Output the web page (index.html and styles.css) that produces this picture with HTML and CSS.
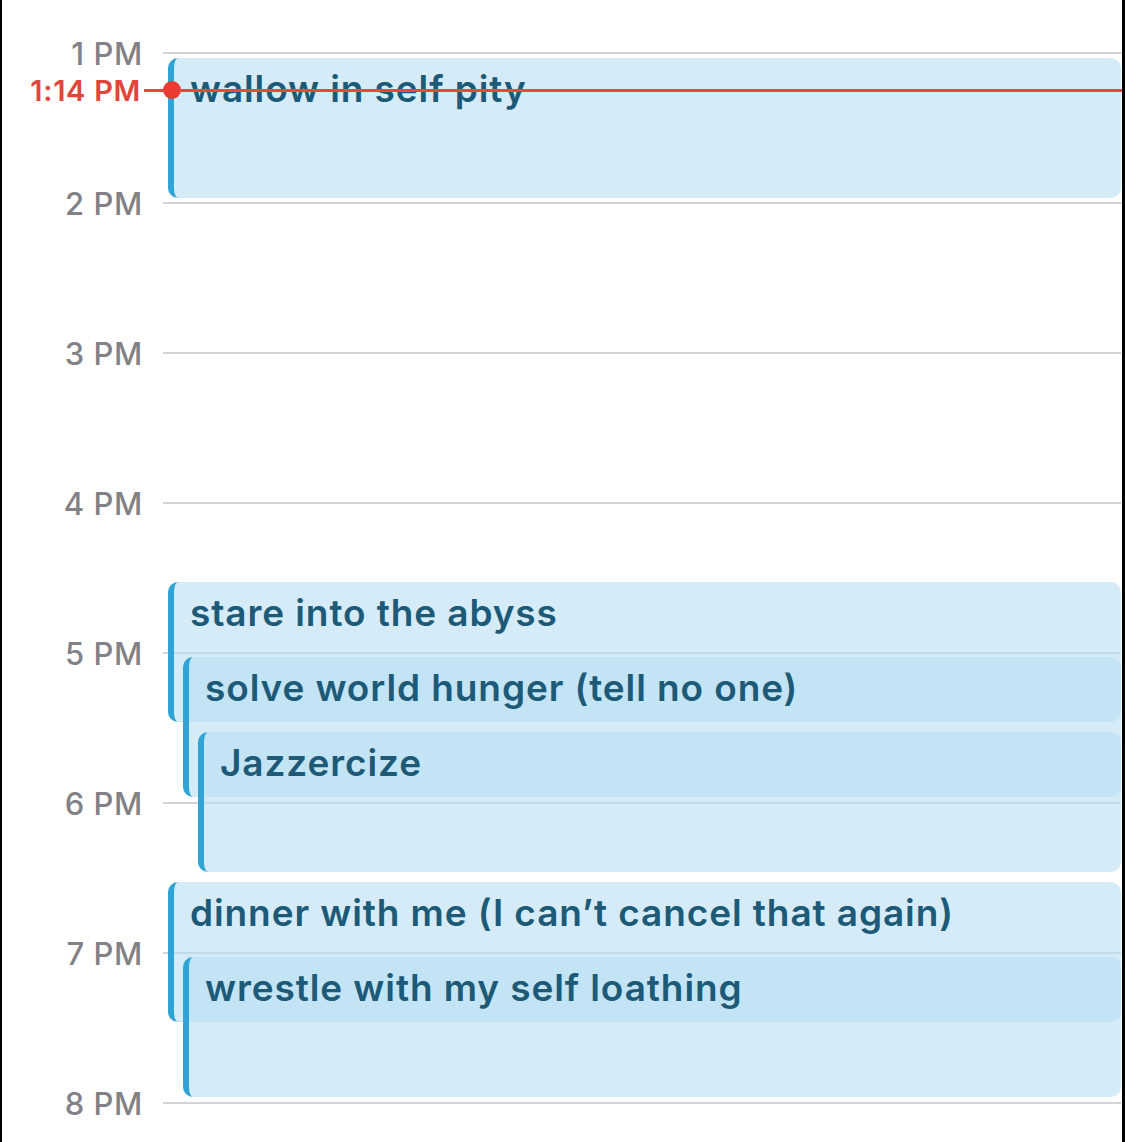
FILE: index.html
```html
<!DOCTYPE html>
<html>
<head>
  <title>Day</title>
  <link rel="stylesheet" href="styles.css">
</head>
<body>
  <div class="day">
    <div class="hour"><span class="label">1 PM</span><span class="rule"></span></div>
    <div class="hour"><span class="label">2 PM</span><span class="rule"></span></div>
    <div class="hour"><span class="label">3 PM</span><span class="rule"></span></div>
    <div class="hour"><span class="label">4 PM</span><span class="rule"></span></div>
    <div class="hour"><span class="label">5 PM</span><span class="rule"></span></div>
    <div class="hour"><span class="label">6 PM</span><span class="rule"></span></div>
    <div class="hour"><span class="label">7 PM</span><span class="rule"></span></div>
    <div class="hour hour-last"><span class="label">8 PM</span><span class="rule"></span></div>

    <!-- events sit on the time canvas -->
    <div class="event ev-wallow">wallow in self pity</div>
    <div class="event ev-stare">stare into the abyss</div>
    <div class="event ev-solve">solve world hunger (tell no one)</div>
    <div class="event ev-jazz">Jazzercize</div>
    <div class="event ev-dinner">dinner with me (I can’t cancel that again)</div>
    <div class="event ev-wrestle">wrestle with my self loathing</div>

    <div class="now">
      <span class="now-label">1:14 PM</span>
      <span class="now-dash"></span>
      <span class="now-dot"></span>
      <span class="now-line"></span>
    </div>
  </div>
</body>
</html>
```

FILE: styles.css
```css
html, body {
  margin: 0;
  padding: 0;
  background: #fff;
  overflow: hidden;
}
body {
  width: 1125px;
  height: 1142px;
  box-sizing: border-box;
  border-left: 2px solid #000;
  border-right: 3px solid #000;
  font-family: Inter, "Open Sans", sans-serif;
}
.day {
  position: relative;
  height: 1142px;
  padding-top: 52px;
  box-sizing: border-box;
  overflow: hidden;
}
.hour {
  display: flex;
  height: 150px;
}
.hour-last {
  height: 38px;
}
.hour .label {
  width: 141px;
  text-align: right;
  font-size: 31px;
  font-weight: 500;
  letter-spacing: 0.6px;
  line-height: 36px;
  margin-top: -16px;
  height: 36px;
  color: #828286;
}
.hour .rule {
  flex: 1;
  margin-left: 20px;
  margin-right: 1px;
  border-top: 2px solid #d3d3d7;
}

.event {
  position: absolute;
  right: 1px;
  height: 140px;
  box-sizing: border-box;
  padding: 0 0 0 16px;
  border-left: 6px solid #31a4d7;
  border-radius: 10px;
  background: rgba(182, 222, 242, 0.57);
  color: #1d5a78;
  font-size: 37px;
  font-weight: 600;
  letter-spacing: 0.9px;
  line-height: 62px;
  white-space: nowrap;
  overflow: hidden;
}
.ev-wallow { top: 58px; left: 166px; }
.ev-stare { top: 582px; left: 166px; }
.ev-solve { top: 657px; left: 181px; }
.ev-jazz { top: 732px; left: 196px; }
.ev-dinner { top: 882px; left: 166px; }
.ev-wrestle { top: 957px; left: 181px; }

.now {
  position: absolute;
  top: 76px;
  left: 0;
  right: 0;
  height: 28px;
  display: flex;
  align-items: center;
}
.now-label {
  width: 139px;
  text-align: right;
  color: #e0463c;
  font-size: 29px;
  font-weight: 600;
  letter-spacing: 0.7px;
}
.now-dash {
  width: 21px;
  height: 3px;
  margin-left: 3px;
  background: #e5483d;
}
.now-dot {
  width: 18px;
  height: 18px;
  border-radius: 50%;
  background: #eb3b30;
  margin-left: -2px;
}
.now-line {
  flex: 1;
  height: 3px;
  margin-left: -2px;
  background: #e14a3f;
}
```
